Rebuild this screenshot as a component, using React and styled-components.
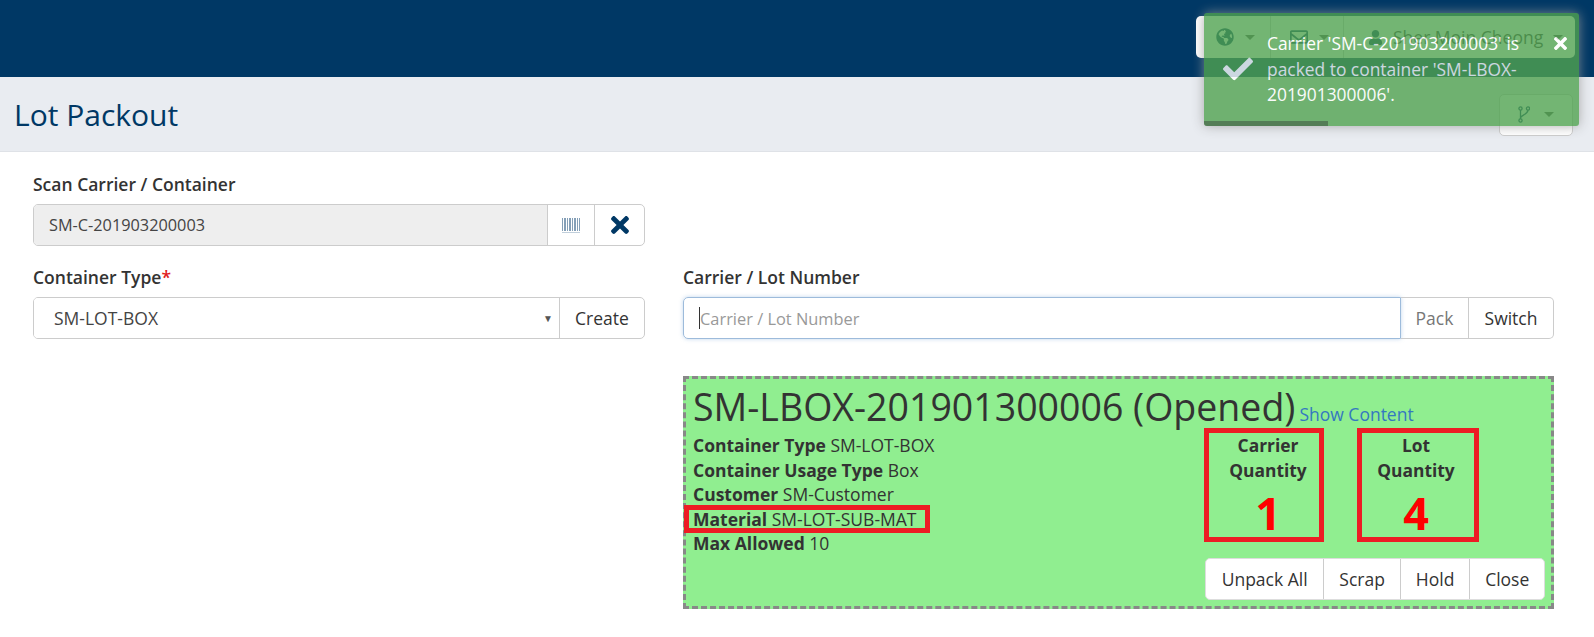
import React from 'react';
import styled, { createGlobalStyle } from 'styled-components';
import {
  FaGlobeAmericas,
  FaRegEnvelope,
  FaUser,
  FaCheck,
  FaTimes,
} from 'react-icons/fa';

const GlobalStyle = createGlobalStyle`
  html, body {
    margin: 0;
    padding: 0;
    background: #fff;
    font-family: "Open Sans", "Noto Sans", sans-serif;
    font-size: 17.5px;
    color: #333;
  }
  * { box-sizing: border-box; }
`;

const Page = styled.div`
  position: relative;
  width: 1594px;
  height: 637px;
  overflow: hidden;
`;

const TopBar = styled.header`
  height: 77px;
  background: #003865;
  display: flex;
  justify-content: flex-end;
  align-items: flex-start;
  padding: 16px 19px 0 0;
`;

const UserMenu = styled.div`
  display: flex;
  height: 42px;
  background: #fff;
  border-radius: 5px;
  color: #003865;
`;

const MenuItem = styled.div`
  display: flex;
  align-items: center;
  gap: ${(props) => props.$gap || 10}px;
  width: ${(props) => props.$w}px;
  padding-left: ${(props) => props.$pad || 13}px;
  border-left: ${(props) => (props.$first ? 'none' : '1px solid #ccc')};
  font-size: 17.5px;
  color: #333;
  white-space: nowrap;
  svg { color: #003865; }
`;

const Caret = styled.span`
  width: 0;
  height: 0;
  border-left: 5px solid transparent;
  border-right: 5px solid transparent;
  border-top: 5px solid #555;
`;

const TitleBar = styled.div`
  height: 75px;
  background: #e9ecf1;
  border-bottom: 1px solid #dfe2e7;
  display: flex;
  align-items: center;
  justify-content: space-between;
  padding: 0 21px 0 14px;
`;

const PageTitle = styled.h1`
  margin: 0;
  font-size: 30px;
  font-weight: 400;
  color: #003865;
`;

const BranchButton = styled.div`
  width: 74px;
  height: 42px;
  margin-top: 1px;
  display: flex;
  align-items: center;
  justify-content: center;
  gap: 14px;
  background: #fff;
  border: 1px solid #ccc;
  border-radius: 5px;
  color: #003865;
`;

const Content = styled.main`
  display: grid;
  grid-template-columns: 612px 871px;
  column-gap: 38px;
  padding: 20px 0 0 33px;
`;

const Field = styled.div`
  grid-column: ${(props) => props.$col || 'auto'};
  margin-bottom: 19px;
`;

const Label = styled.label`
  display: block;
  height: 23px;
  margin-bottom: 9px;
  font-size: 17.5px;
  line-height: 25px;
  font-weight: 600;
  color: #333;
`;

const Required = styled.span`
  color: #e02020;
`;

const InputGroup = styled.div`
  display: flex;
  height: 42px;
  border: 1px solid #ccc;
  border-radius: 5px;
  background: #fff;
  overflow: hidden;
`;

const Value = styled.div`
  flex: 1;
  display: flex;
  align-items: center;
  justify-content: space-between;
  padding: 0 ${(props) => (props.$select ? '6px' : '15px')} 0 ${(props) => (props.$select ? '20px' : '15px')};
  font-size: ${(props) => (props.$select ? '17.5px' : '16.3px')};
  color: #444;
  background: ${(props) => (props.$disabled ? '#eee' : '#fff')};
`;

const Addon = styled.div`
  width: ${(props) => props.$w}px;
  display: flex;
  align-items: center;
  justify-content: center;
  border-left: 1px solid #ccc;
  font-size: 17.5px;
  color: ${(props) => props.$color || '#333'};
`;

const SelectArrow = styled.span`
  font-size: 10px;
  color: #555;
`;

const ScanInput = styled.div`
  flex: 1;
  display: flex;
  align-items: center;
  padding-left: 15px;
  border: 1px solid #9dbbdb;
  border-radius: 5px 0 0 5px;
  box-shadow: 0 0 4px rgba(102, 155, 210, 0.4);
  font-size: 16.4px;
  color: #999;
`;

const Cursor = styled.span`
  width: 1px;
  height: 22px;
  background: #333;
`;

const ScanGroup = styled(InputGroup)`
  overflow: visible;
  border: none;
`;

const ScanButton = styled.div`
  width: ${(props) => props.$w}px;
  display: flex;
  align-items: center;
  justify-content: center;
  border: 1px solid #ccc;
  border-left: none;
  border-radius: ${(props) => (props.$last ? '0 5px 5px 0' : '0')};
  font-size: 17.5px;
  color: ${(props) => props.$color || '#333'};
`;

const ContainerPanel = styled.section`
  grid-column: 2;
  height: 233px;
  margin-top: 18px;
  padding: 3px 6px 0 7px;
  background: #90ee90;
  border: 3px dashed #888;
`;

const PanelHeading = styled.div`
  display: flex;
  align-items: baseline;
  gap: 4px;
  height: 51px;
`;

const PanelTitle = styled.h2`
  margin: 0;
  font-size: 37.5px;
  line-height: 50px;
  font-weight: 400;
  color: #333;
  white-space: nowrap;
`;

const ShowContent = styled.a`
  font-size: 17.5px;
  color: #3478c0;
`;

const PanelBody = styled.div`
  display: flex;
  justify-content: space-between;
`;

const InfoList = styled.div`
  display: flex;
  flex-direction: column;
`;

const InfoRow = styled.div`
  height: 24.5px;
  font-size: 17.5px;
  line-height: 24.5px;
  white-space: nowrap;
  b { font-weight: 700; }
`;

const MarkedRow = styled(InfoRow)`
  width: fit-content;
  outline: 5px solid #ed1c24;
  outline-offset: -3px;
  margin-left: -7px;
  padding: 0 12px 0 7px;
`;

const SideColumn = styled.div`
  width: 340px;
  margin-top: -5px;
`;

const QuantityRow = styled.div`
  display: flex;
  gap: 33px;
  margin-left: -1px;
`;

const QuantityBox = styled.div`
  width: ${(props) => props.$w}px;
  height: 114px;
  padding: 0 ${(props) => props.$right || 0}px 0 ${(props) => props.$left || 0}px;
  border: 5px solid #ed1c24;
  text-align: center;
`;

const QuantityLabel = styled.div`
  font-weight: 700;
  line-height: 25px;
  font-size: 17.4px;
`;

const QuantityValue = styled.div`
  margin-top: 7px;
  font-size: 45px;
  line-height: 46px;
  font-weight: 700;
  color: #f00;
`;

const ActionGroup = styled.div`
  display: flex;
  height: 42px;
  margin-top: 16px;
  background: #fff;
  border: 1px solid #ddd;
  border-radius: 5px;
`;

const ActionButton = styled.div`
  display: flex;
  align-items: center;
  justify-content: center;
  width: ${(props) => props.$w}px;
  border-left: ${(props) => (props.$first ? 'none' : '1px solid #ccc')};
  font-size: 17.5px;
  color: #333;
`;

const Toast = styled.div`
  position: absolute;
  top: 13px;
  left: 1204px;
  width: 375px;
  height: 113px;
  padding: 18px 40px 0 63px;
  background: #51a351;
  color: #fff;
  opacity: 0.8;
  border-radius: 3px;
  box-shadow: 0 0 12px #999;
  font-size: 17.4px;
  line-height: 25.5px;
  overflow: hidden;
`;

const ToastCheck = styled.div`
  position: absolute;
  left: 19px;
  top: 41px;
  font-size: 30px;
  line-height: 0;
`;

const ToastClose = styled.div`
  position: absolute;
  right: 9px;
  top: 21px;
  font-size: 19px;
  line-height: 0;
`;

const ToastProgress = styled.div`
  position: absolute;
  left: 0;
  bottom: 0;
  height: 5px;
  background: #000;
  opacity: 0.4;
`;

const Barcode = () => (
  <svg width="18" height="15" viewBox="0 0 18 15">
    <g fill="#5b7f9f" opacity="0.75">
      {[0, 2, 3, 5, 7, 8, 10, 12, 13, 15, 17].map((x) => (
        <rect key={x} x={x} y="0" width="1" height="13" />
      ))}
      <rect x="0" y="14" width="18" height="1" opacity="0.5" />
    </g>
  </svg>
);

const BranchIcon = () => (
  <svg width="12" height="17" viewBox="0 0 12 17" fill="none" stroke="#003865" strokeWidth="1.3">
    <circle cx="2.5" cy="2.5" r="1.6" />
    <circle cx="10" cy="2.5" r="1.6" />
    <circle cx="2.5" cy="14.5" r="1.6" />
    <path d="M2.5 4.1V12.9M2.5 12C3 8.5 9.5 9 10 4.1" />
  </svg>
);

const details = [
  ['Container Type', 'SM-LOT-BOX'],
  ['Container Usage Type', 'Box'],
  ['Customer', 'SM-Customer'],
];

const App = () => {
  return (
    <Page>
      <GlobalStyle />
      <TopBar>
        <UserMenu>
          <MenuItem $first $w={74} $pad={20} $gap={11}>
            <FaGlobeAmericas size={18} />
            <Caret />
          </MenuItem>
          <MenuItem $w={73} $pad={19} $gap={11}>
            <FaRegEnvelope size={18} />
            <Caret />
          </MenuItem>
          <MenuItem $w={232} $pad={24} $gap={10}>
            <FaUser size={15} />
            <span>Sher Moin Cheong</span>
            <Caret />
          </MenuItem>
        </UserMenu>
      </TopBar>
      <TitleBar>
        <PageTitle>Lot Packout</PageTitle>
        <BranchButton>
          <BranchIcon />
          <Caret />
        </BranchButton>
      </TitleBar>
      <Content>
        <Field $col="1">
          <Label>Scan Carrier / Container</Label>
          <InputGroup>
            <Value $disabled>SM-C-201903200003</Value>
            <Addon $w={47}>
              <Barcode />
            </Addon>
            <Addon $w={50} $color="#003865">
              <FaTimes size={26} />
            </Addon>
          </InputGroup>
        </Field>
        <div />
        <Field>
          <Label>
            Container Type<Required>*</Required>
          </Label>
          <InputGroup>
            <Value $select>
              SM-LOT-BOX
              <SelectArrow>▼</SelectArrow>
            </Value>
            <Addon $w={85}>Create</Addon>
          </InputGroup>
        </Field>
        <Field>
          <Label>Carrier / Lot Number</Label>
          <ScanGroup>
            <ScanInput>
              <Cursor />
              Carrier / Lot Number
            </ScanInput>
            <ScanButton $w={68} $color="#777">
              Pack
            </ScanButton>
            <ScanButton $w={85} $last>
              Switch
            </ScanButton>
          </ScanGroup>
        </Field>
        <ContainerPanel>
          <PanelHeading>
            <PanelTitle>SM-LBOX-201901300006 (Opened)</PanelTitle>
            <ShowContent>Show Content</ShowContent>
          </PanelHeading>
          <PanelBody>
            <InfoList>
              {details.map(([name, value]) => (
                <InfoRow key={name}>
                  <b>{name}</b> {value}
                </InfoRow>
              ))}
              <MarkedRow>
                <b>Material</b> SM-LOT-SUB-MAT
              </MarkedRow>
              <InfoRow>
                <b>Max Allowed</b> 10
              </InfoRow>
            </InfoList>
            <SideColumn>
              <QuantityRow>
                <QuantityBox $w={120} $left={8}>
                  <QuantityLabel>
                    Carrier
                    <br />
                    Quantity
                  </QuantityLabel>
                  <QuantityValue>1</QuantityValue>
                </QuantityBox>
                <QuantityBox $w={122} $right={4}>
                  <QuantityLabel>
                    Lot
                    <br />
                    Quantity
                  </QuantityLabel>
                  <QuantityValue>4</QuantityValue>
                </QuantityBox>
              </QuantityRow>
              <ActionGroup>
                <ActionButton $first $w={118}>
                  Unpack All
                </ActionButton>
                <ActionButton $w={77}>Scrap</ActionButton>
                <ActionButton $w={70}>Hold</ActionButton>
                <ActionButton $w={75}>Close</ActionButton>
              </ActionGroup>
            </SideColumn>
          </PanelBody>
        </ContainerPanel>
      </Content>
      <Toast>
        <ToastCheck>
          <FaCheck />
        </ToastCheck>
        <ToastClose>
          <FaTimes />
        </ToastClose>
        Carrier 'SM-C-201903200003' is packed to container 'SM-LBOX-201901300006'.
        <ToastProgress style={{ width: '33%' }} />
      </Toast>
    </Page>
  );
};

export default App;
